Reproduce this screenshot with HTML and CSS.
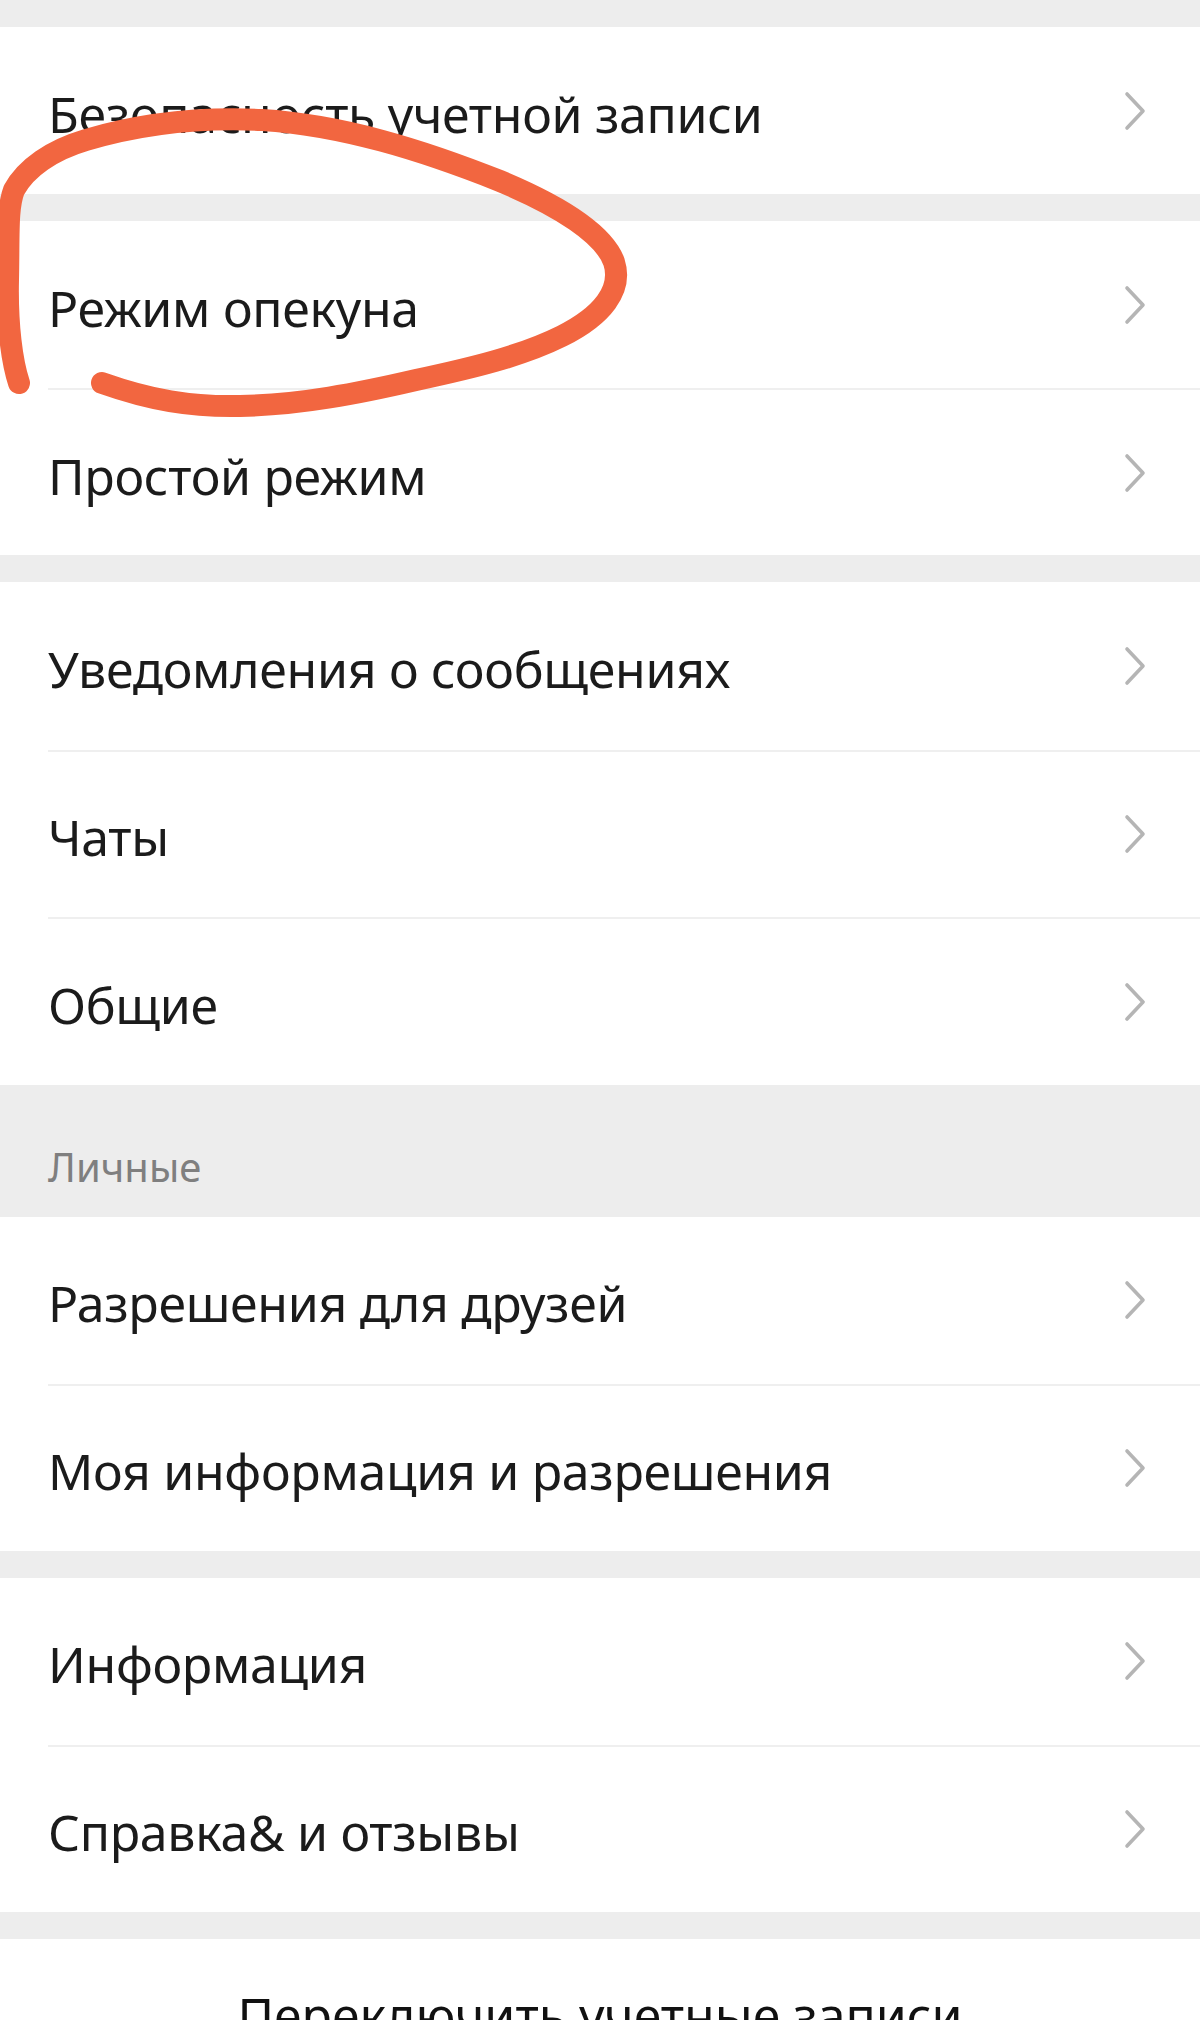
FILE: index.html
```html
<!DOCTYPE html>
<html lang="ru">
<head>
<meta charset="utf-8">
<title>Настройки</title>
<link rel="stylesheet" href="styles.css">
</head>
<body>
<div class="page">
  <div class="spacer"></div>
  <section class="group">
    <div class="row"><div class="row-body"><span class="label">Безопасность учетной записи</span><svg class="chev" viewBox="0 0 22 40"><polyline points="3,3 19,20 3,37"/></svg></div></div>
  </section>
  <div class="spacer"></div>
  <section class="group">
    <div class="row"><div class="row-body"><span class="label">Режим опекуна</span><svg class="chev" viewBox="0 0 22 40"><polyline points="3,3 19,20 3,37"/></svg></div></div>
    <div class="row"><div class="row-body"><span class="label">Простой режим</span><svg class="chev" viewBox="0 0 22 40"><polyline points="3,3 19,20 3,37"/></svg></div></div>
  </section>
  <div class="spacer"></div>
  <section class="group">
    <div class="row"><div class="row-body"><span class="label">Уведомления о сообщениях</span><svg class="chev" viewBox="0 0 22 40"><polyline points="3,3 19,20 3,37"/></svg></div></div>
    <div class="row"><div class="row-body"><span class="label">Чаты</span><svg class="chev" viewBox="0 0 22 40"><polyline points="3,3 19,20 3,37"/></svg></div></div>
    <div class="row"><div class="row-body"><span class="label">Общие</span><svg class="chev" viewBox="0 0 22 40"><polyline points="3,3 19,20 3,37"/></svg></div></div>
  </section>
  <div class="section-title">Личные</div>
  <section class="group">
    <div class="row"><div class="row-body"><span class="label">Разрешения для друзей</span><svg class="chev" viewBox="0 0 22 40"><polyline points="3,3 19,20 3,37"/></svg></div></div>
    <div class="row"><div class="row-body"><span class="label">Моя информация и разрешения</span><svg class="chev" viewBox="0 0 22 40"><polyline points="3,3 19,20 3,37"/></svg></div></div>
  </section>
  <div class="spacer"></div>
  <section class="group">
    <div class="row"><div class="row-body"><span class="label">Информация</span><svg class="chev" viewBox="0 0 22 40"><polyline points="3,3 19,20 3,37"/></svg></div></div>
    <div class="row"><div class="row-body"><span class="label">Справка&amp; и отзывы</span><svg class="chev" viewBox="0 0 22 40"><polyline points="3,3 19,20 3,37"/></svg></div></div>
  </section>
  <div class="spacer"></div>
  <section class="group bottom">
    <div class="switch">Переключить учетные записи</div>
  </section>

  <svg class="scribble" viewBox="0 0 1200 2020" width="1200" height="2020">
    <path d="M19,383 C12,362 7,325 8,280 C9,235 7,208 14,190 C26,168 52,150 86,140 C140,124 200,117 262,120 C342,125 422,150 500,181 C560,206 604,234 614,262 C623,290 602,316 562,336 C522,356 472,368 416,380 C360,393 300,405 240,406 C190,407 150,400 102,383"/>
  </svg>
</div>
</body>
</html>
```
FILE: styles.css
```css
html, body {
  margin: 0;
  padding: 0;
}
body {
  background: #ededed;
  font-family: "Noto Sans", "Open Sans", sans-serif;
  color: #1b1b1b;
  width: 1200px;
  height: 2020px;
  overflow: hidden;
}
.page {
  position: relative;
  width: 1200px;
  height: 2020px;
  overflow: hidden;
}
.spacer {
  height: 27px;
}
.group {
  background: #ffffff;
}
.row {
  padding-left: 48px;
  height: 167px;
  box-sizing: border-box;
}
.row-body {
  height: 100%;
  box-sizing: border-box;
  display: flex;
  align-items: center;
  justify-content: space-between;
  padding-right: 54px;
  padding-top: 6px;
}
.row + .row .row-body {
  border-top: 2px solid #efefef;
}
.group:nth-of-type(3) .row {
  height: 167.5px;
}
.label {
  font-size: 50px;
  line-height: 1.2;
  letter-spacing: -0.3px;
}
.chev {
  width: 22px;
  height: 40px;
  margin-top: -6px;
  fill: none;
  stroke: #b5b5b5;
  stroke-width: 3.6;
  stroke-linecap: round;
  stroke-linejoin: round;
}
.section-title {
  height: 132px;
  box-sizing: border-box;
  padding: 0 48px 26px;
  display: flex;
  align-items: flex-end;
  font-size: 40px;
  line-height: 1.2;
  color: #7f7f7f;
}
.bottom {
  height: 82px;
  overflow: hidden;
}
.switch {
  padding-top: 46px;
  text-align: center;
  font-size: 50px;
  line-height: 1.2;
  color: #111111;
}
.scribble {
  position: absolute;
  left: 0;
  top: 0;
  pointer-events: none;
  fill: none;
  stroke: #f26640;
  stroke-width: 22;
  stroke-linecap: round;
  stroke-linejoin: round;
}
```
